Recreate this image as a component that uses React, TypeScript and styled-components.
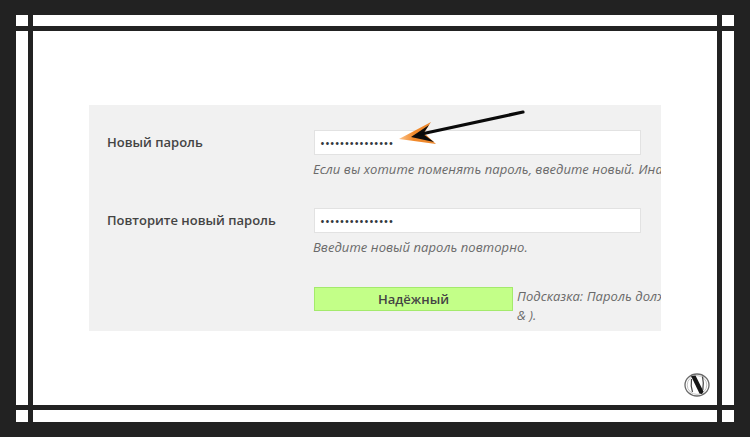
import React from 'react';
import styled, { createGlobalStyle } from 'styled-components';

const GlobalStyle = createGlobalStyle`
    html, body {
        margin: 0;
        padding: 0;
        background: #222222;
    }
`;

const Page = styled.div`
    box-sizing: border-box;
    width: 750px;
    height: 437px;
    padding: 15px 16px;
    background: #222222;
`;

const Frame = styled.div`
    display: grid;
    height: 100%;
    grid-template-columns: 12px 1fr 12px;
    grid-template-rows: 11px 1fr 12px;
    gap: 5px;
`;

const Band = styled.div`
    background: #ffffff;
`;

const Canvas = styled.div`
    display: flex;
    flex-direction: column;
    padding: 74px 7px 8px 56px;
    background: #ffffff;
    min-height: 0;
`;

const Panel = styled.div`
    position: relative;
    box-sizing: border-box;
    display: flex;
    flex-direction: column;
    width: 572px;
    height: 226px;
    padding-top: 25px;
    overflow: hidden;
    background: #f1f1f1;
    font-family: 'Open Sans', sans-serif;
    font-size: 13px;
    color: #444444;
`;

const Row = styled.div<{ $gap: number }>`
    display: flex;
    margin-bottom: ${({ $gap }) => $gap}px;
`;

const Label = styled.div`
    flex: 0 0 207px;
    box-sizing: border-box;
    padding: 3px 0 0 18px;
    line-height: 18px;
    font-weight: 600;
    color: #444444;
`;

const Field = styled.div`
    flex: 0 0 auto;
    width: 700px;
`;

const PasswordInput = styled.input`
    display: block;
    box-sizing: border-box;
    width: 327px;
    height: 25px;
    margin: 0 0 0 18px;
    padding: 0 5px;
    border: 1px solid #e2e2e2;
    outline: none;
    background: #ffffff;
    font-family: 'Open Sans', sans-serif;
    font-size: 13px;
    color: #32373c;
`;

const Hint = styled.p`
    margin: 4px 0 0 17px;
    line-height: 20px;
    font-style: italic;
    letter-spacing: 0.07px;
    white-space: nowrap;
    color: #6a6a6a;
`;

const StrengthRow = styled.div`
    display: flex;
    align-items: flex-start;
    margin-left: 225px;
`;

const Strength = styled.div`
    flex: 0 0 199px;
    box-sizing: border-box;
    height: 24px;
    border: 1px solid #a4ea6c;
    background: #c3ff88;
    line-height: 22px;
    text-align: center;
    font-weight: 600;
    color: #444444;
`;

const StrengthNote = styled.p`
    flex: 0 0 auto;
    margin: 0 0 0 4px;
    line-height: 19px;
    font-style: italic;
    letter-spacing: 0.07px;
    white-space: nowrap;
    color: #6a6a6a;
`;

const Arrow = styled.svg`
    position: absolute;
    left: 0;
    top: 0;
    pointer-events: none;
`;

const Logo = styled.svg`
    flex: 0 0 auto;
    align-self: flex-end;
    margin-top: auto;
`;

const App: React.FC = () => (
    <Page>
        <GlobalStyle />
        <Frame>
            <Band /><Band /><Band />
            <Band />
            <Canvas>
                <Panel>
                    <Row $gap={29}>
                        <Label>Новый пароль</Label>
                        <Field>
                            <PasswordInput type="password" readOnly value="passwordpasswor" />
                            <Hint>Если вы хотите поменять пароль, введите новый. Иначе оставьте это поле пустым.</Hint>
                        </Field>
                    </Row>
                    <Row $gap={30}>
                        <Label>Повторите новый пароль</Label>
                        <Field>
                            <PasswordInput type="password" readOnly value="passwordpasswor" />
                            <Hint>Введите новый пароль повторно.</Hint>
                        </Field>
                    </Row>
                    <StrengthRow>
                        <Strength>Надёжный</Strength>
                        <StrengthNote>
                            Подсказка: Пароль должен состоять как минимум из семи символов.
                            <br />
                            &amp; ).
                        </StrengthNote>
                    </StrengthRow>
                    <Arrow width="572" height="60" viewBox="89 105 572 60">
                        <defs>
                            <linearGradient id="arrowGlow" x1="0" y1="0" x2="1" y2="0">
                                <stop offset="0" stopColor="#fbc590" />
                                <stop offset="0.4" stopColor="#f28a2a" />
                                <stop offset="1" stopColor="#e8862f" />
                            </linearGradient>
                        </defs>
                        <path d="M399 139 L431 122 L424 133 L436 144 Z" fill="url(#arrowGlow)" />
                        <path d="M411 137 L429 125 L423 134 L434 142 Z" fill="#0d0d0d" />
                        <path d="M419 134.5 L523 112" stroke="#0a0a0a" strokeWidth="3.2" strokeLinecap="round" fill="none" />
                    </Arrow>
                </Panel>
                <Logo width="26" height="24" viewBox="0 0 26 24">
                    <ellipse cx="13" cy="12" rx="12" ry="11" fill="#ffffff" stroke="#6a6a6a" strokeWidth="1.3" />
                    <ellipse cx="13" cy="12" rx="9.8" ry="9.4" fill="none" stroke="#b5b5b5" strokeWidth="0.8" />
                    <path d="M7 3 L11.5 2.6 L19.5 18.5 L18 21 L15.5 20.5 Z" fill="#161616" />
                    <path d="M7.5 6 Q6.5 13 8.5 19 M18.5 3.5 Q20 10 18.8 17" stroke="#444444" strokeWidth="1.2" fill="none" />
                </Logo>
            </Canvas>
            <Band />
            <Band /><Band /><Band />
        </Frame>
    </Page>
);

export default App;
